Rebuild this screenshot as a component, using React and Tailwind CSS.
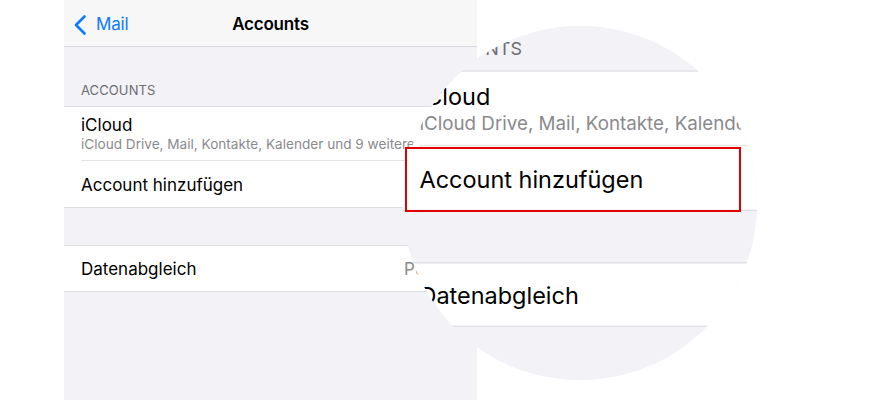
import React from 'react';

const font = { fontFamily: 'Inter, "Noto Sans", "Liberation Sans", sans-serif' };

function Phone() {
  return (
    <div className="w-[413px] h-[400px] bg-[#f2f2f7] flex flex-col" style={font}>
      <div className="h-[47px] pt-[3px] bg-[#f7f7f7] border-b border-[#d8d8dc] grid grid-cols-[1fr_auto_1fr] items-center">
        <div className="flex items-center pl-[9px] gap-[9px] text-[#0a7aff]">
          <svg width="14" height="22" viewBox="0 0 14 22" fill="none">
            <path d="M11.5 2.5 L3 11 L11.5 19.5" stroke="#0a7aff" strokeWidth="2.6" strokeLinecap="round" strokeLinejoin="round" />
          </svg>
          <span className="text-[17px] tracking-[-0.2px]">Mail</span>
        </div>
        <div className="text-[17px] font-semibold text-black tracking-[-0.2px]">Accounts</div>
        <div />
      </div>
      <div className="h-[59px] flex items-end pl-[17px] pb-[9px]">
        <span className="text-[13px] text-[#6d6d72] leading-none tracking-[0.1px]">ACCOUNTS</span>
      </div>
      <div className="bg-white border-y border-[#dedee3]">
        <div className="pl-[17px]">
          <div className="h-[54px] pt-[1px] flex flex-col justify-center border-b border-[#e3e3e8]">
            <div className="text-[17px] leading-[21px] text-black">iCloud</div>
            <div className="text-[13.6px] leading-[17px] text-[#8a8a8e] whitespace-nowrap">
              iCloud Drive, Mail, Kontakte, Kalender und 9 weitere
            </div>
          </div>
        </div>
        <div className="h-[46px] pl-[17px] pt-[3px] flex items-center text-[17px] text-black">
          Account hinzufügen
        </div>
      </div>
      <div className="h-[37px]" />
      <div className="bg-white border-y border-[#dedee3] h-[47px] pl-[17px] pr-[14px] pt-[3px] flex items-center">
        <span className="text-[17px] text-black flex-1">Datenabgleich</span>
        <span className="text-[17px] text-[#8a8a8e]">Push</span>
        <svg className="ml-[10px]" width="9" height="15" viewBox="0 0 9 15" fill="none">
          <path d="M1.5 1.5 L7.5 7.5 L1.5 13.5" stroke="#c4c4c7" strokeWidth="2" strokeLinecap="round" strokeLinejoin="round" />
        </svg>
      </div>
    </div>
  );
}

export default function App() {
  return (
    <div className="relative w-[879px] h-[400px] bg-white overflow-hidden">
      <div className="ml-[64px]">
        <Phone />
      </div>
      <div className="absolute left-[403px] top-[26px] w-[354px] h-[354px] rounded-full overflow-hidden bg-[#f2f2f7]">
        <div className="absolute left-[-7px] top-[-102px] scale-[1.38] origin-top-left">
          <Phone />
        </div>
      </div>
      <div className="absolute left-[405px] top-[147px] w-[336px] h-[65px] border-2 border-[#e30000]" />
    </div>
  );
}
